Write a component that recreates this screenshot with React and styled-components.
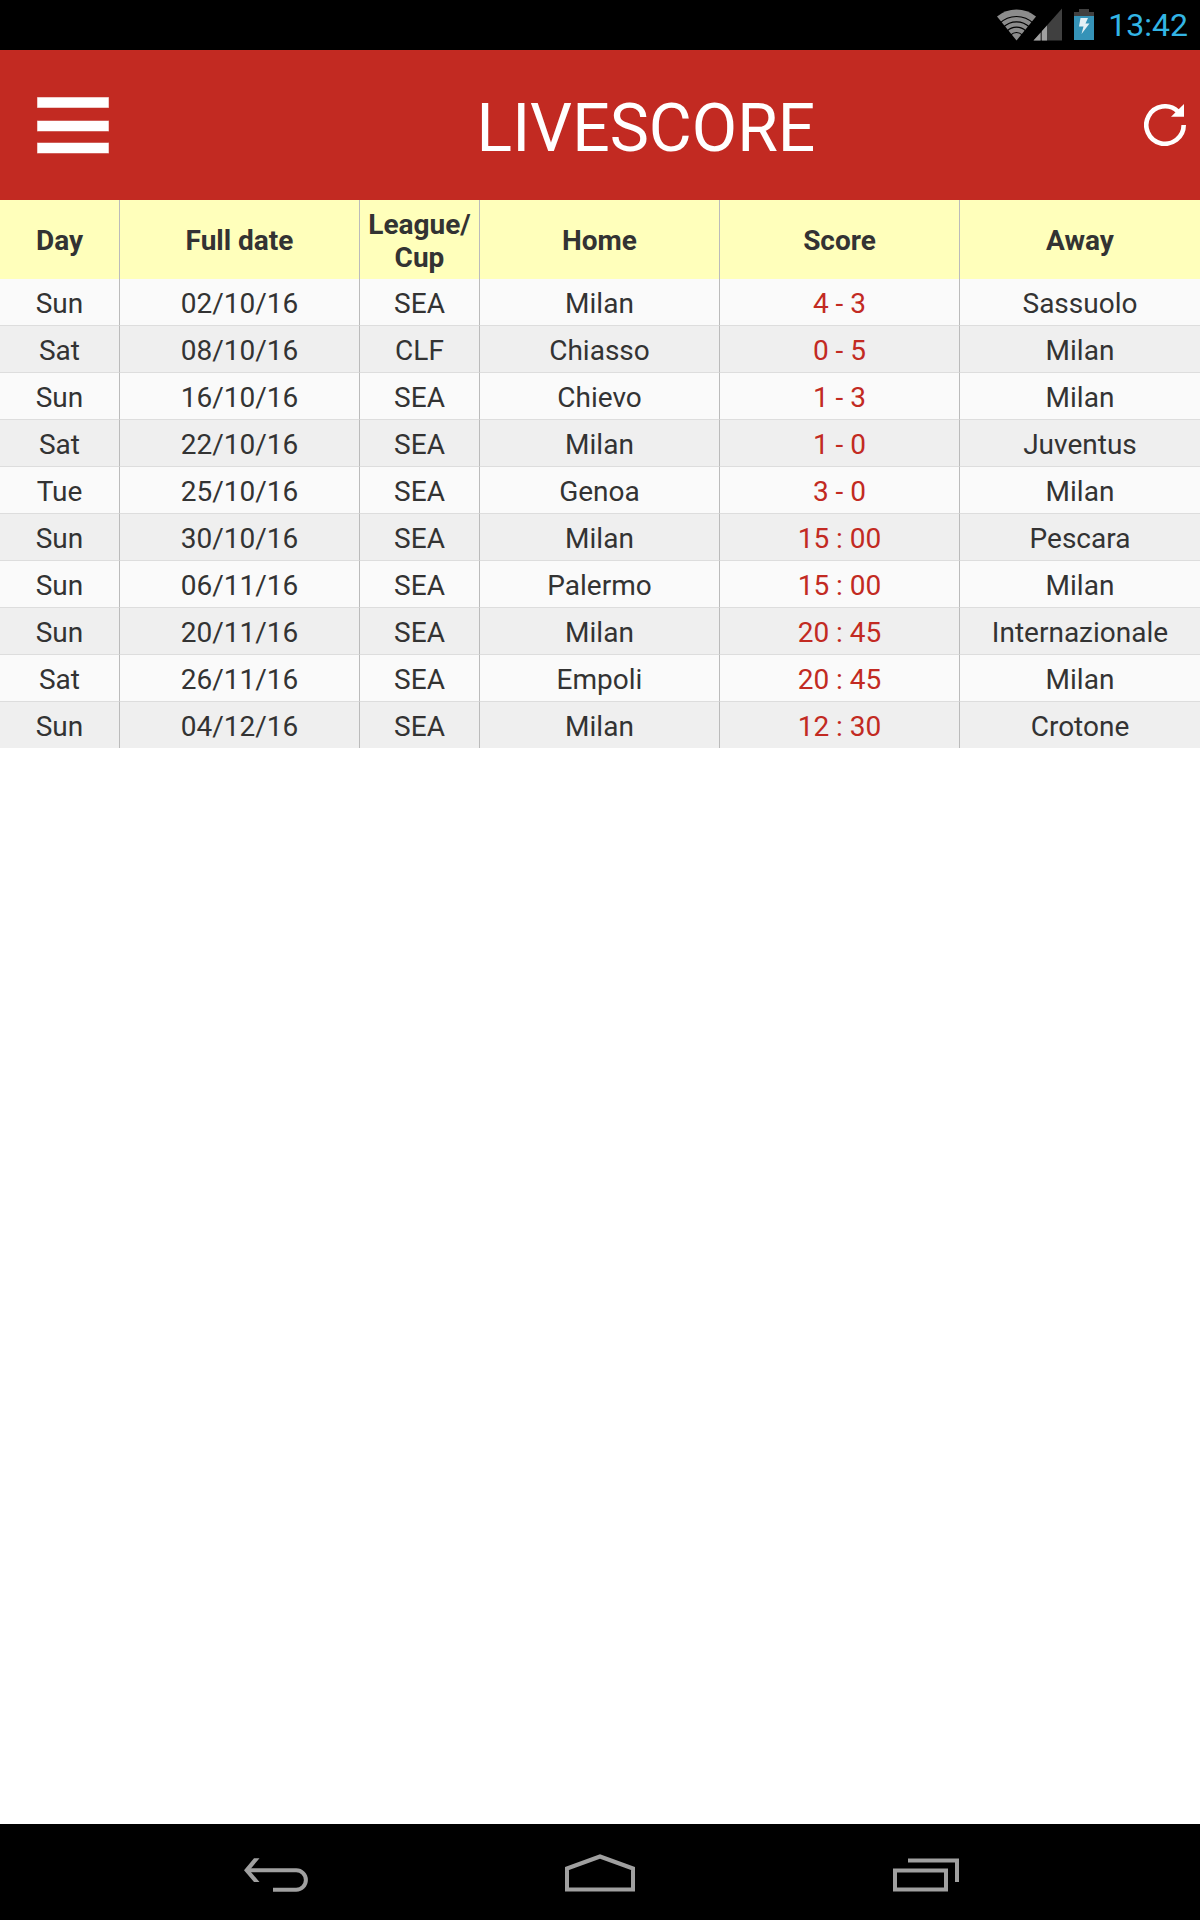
import React from "react";
import styled, { createGlobalStyle } from "styled-components";

const GlobalStyle = createGlobalStyle`
  *, *::before, *::after { box-sizing: border-box; }
  body {
    margin: 0;
    background: #fff;
    color: #333;
    font-family: Roboto, "Liberation Sans", sans-serif;
  }
`;

const Screen = styled.div`
  display: flex;
  flex-direction: column;
  min-height: 100vh;
`;

const StatusBar = styled.div`
  display: flex;
  align-items: center;
  justify-content: flex-end;
  height: 50px;
  padding-right: 12px;
  background: #000;
`;

const StatusIcons = styled.svg`
  display: block;
  width: 98px;
  height: 50px;
`;

const Clock = styled.time`
  margin-left: 14px;
  color: #33b5e5;
  font-size: 32px;
  line-height: 50px;
`;

const Header = styled.header`
  display: grid;
  grid-template-columns: 150px 1fr 58px;
  align-items: center;
  height: 150px;
  background: #c22a22;
  color: #fff;
`;

const Title = styled.h1`
  margin: 0;
  padding-top: 8px;
  font-size: 66px;
  font-weight: 400;
  line-height: 78px;
  text-align: center;
`;

const IconButton = styled.button`
  display: flex;
  align-items: center;
  height: 100%;
  padding: 0 0 0 ${(p) => p.$inset}px;
  border: 0;
  background: transparent;
  color: inherit;
  cursor: pointer;
`;

const Content = styled.main`
  flex: 1;
`;

const Table = styled.table`
  width: 100%;
  border-collapse: separate;
  border-spacing: 0;
  table-layout: fixed;
  font-size: 28px;
  line-height: 33px;
  text-align: center;
`;

const Col = styled.col`
  width: ${(p) => p.$width};
`;

const HeadCell = styled.th`
  height: 79px;
  padding: 2px 0 0;
  background: #ffffbb;
  font-weight: 700;

  &:not(:last-child) { border-right: 1px solid #bbb; }
`;

const Row = styled.tr`
  background: #fafafa;

  &:nth-child(even) { background: #efefef; }
`;

const Cell = styled.td`
  height: 47px;
  padding: 2px 0 0;
  border-bottom: 1px solid #ddd;
  color: ${(p) => (p.$score ? "#c22a22" : "inherit")};

  &:not(:last-child) { border-right: 1px solid #bbb; }

  ${Row}:last-child & {
    height: 46px;
    border-bottom: 0;
  }
`;

const NavBar = styled.nav`
  display: flex;
  justify-content: center;
  gap: 162px;
  height: 96px;
  background: #000;
`;

const NavButton = styled.button`
  width: 164px;
  height: 96px;
  padding: 0;
  border: 0;
  background: transparent;
  cursor: pointer;

  svg {
    display: block;
    fill: none;
    stroke: #a0a0a0;
    stroke-width: 4;
  }
`;

const columns = [
  { label: "Day", width: "10%" },
  { label: "Full date", width: "20%" },
  { label: "League/ Cup", width: "10%" },
  { label: "Home", width: "20%" },
  { label: "Score", width: "20%" },
  { label: "Away", width: "20%" },
];

const matches = [
  ["Sun", "02/10/16", "SEA", "Milan", "4 - 3", "Sassuolo"],
  ["Sat", "08/10/16", "CLF", "Chiasso", "0 - 5", "Milan"],
  ["Sun", "16/10/16", "SEA", "Chievo", "1 - 3", "Milan"],
  ["Sat", "22/10/16", "SEA", "Milan", "1 - 0", "Juventus"],
  ["Tue", "25/10/16", "SEA", "Genoa", "3 - 0", "Milan"],
  ["Sun", "30/10/16", "SEA", "Milan", "15 : 00", "Pescara"],
  ["Sun", "06/11/16", "SEA", "Palermo", "15 : 00", "Milan"],
  ["Sun", "20/11/16", "SEA", "Milan", "20 : 45", "Internazionale"],
  ["Sat", "26/11/16", "SEA", "Empoli", "20 : 45", "Milan"],
  ["Sun", "04/12/16", "SEA", "Milan", "12 : 30", "Crotone"],
];

function StatusGlyphs() {
  return (
    <StatusIcons viewBox="0 0 98 50" aria-hidden="true">
      <path d="M20.5 40.5 1 16.500A31 31 0 0 1 40 16.500Z" fill="#8c8c8c" />
      <g fill="none" stroke="#000" strokeWidth="1.200">
        <circle cx="20.500" cy="40.500" r="24" />
        <circle cx="20.500" cy="40.500" r="18.700" />
        <circle cx="20.500" cy="40.500" r="13.300" />
        <circle cx="20.500" cy="40.500" r="8" />
      </g>
      <path d="M66 8.500V40.500H37.500Z" fill="#404040" />
      <path d="M37.500 40.500 44.500 32.700V40.500ZM46 31V40.500H51V25.400Z" fill="#a0a0a0" />
      <path d="M83 9h10v3h5v4H78v-4h5z" fill="#404040" />
      <path d="M78 16h20v24H78z" fill="#3593b8" />
      <path d="M84.500 18h7.500l-2.500 5.500h4L85.500 34l2-7.500H83z" fill="#e4f1f6" />
    </StatusIcons>
  );
}

export default function App() {
  return (
    <Screen>
      <GlobalStyle />
      <StatusBar>
        <StatusGlyphs />
        <Clock dateTime="13:42">13:42</Clock>
      </StatusBar>

      <Header>
        <IconButton type="button" aria-label="Open menu" $inset={36}>
          <svg width="74" height="60" viewBox="0 0 74 60">
            <g fill="#fff" stroke="#fff" strokeOpacity=".5" strokeWidth="1">
              <rect x="1.500" y="2.500" width="71" height="10" />
              <rect x="1.500" y="26" width="71" height="10" />
              <rect x="1.500" y="48" width="71" height="10" />
            </g>
          </svg>
        </IconButton>
        <Title>LIVESCORE</Title>
        <IconButton type="button" aria-label="Refresh" $inset={2}>
          <svg width="42" height="42" viewBox="0 0 42 42">
            <path d="M39.700 21A18.700 18.700 0 1 1 33.800 7.400" fill="none" stroke="#fff" strokeWidth="4.600" />
            <path d="M40 0V12.800H27Z" fill="#fff" />
          </svg>
        </IconButton>
      </Header>

      <Content>
        <Table>
          <colgroup>
            {columns.map((c) => (
              <Col key={c.label} $width={c.width} />
            ))}
          </colgroup>
          <thead>
            <tr>
              {columns.map((c) => (
                <HeadCell key={c.label} scope="col">{c.label}</HeadCell>
              ))}
            </tr>
          </thead>
          <tbody>
            {matches.map((match) => (
              <Row key={match[1]}>
                {match.map((value, i) => (
                  <Cell key={columns[i].label} $score={i === 4}>{value}</Cell>
                ))}
              </Row>
            ))}
          </tbody>
        </Table>
      </Content>

      <NavBar aria-label="System">
        <NavButton type="button" aria-label="Back">
          <svg width="164" height="96" viewBox="0 0 164 96">
            <path d="M55 46.300H104.200A9.700 9.700 0 0 1 104.200 65.700H81" />
            <path d="M62 34.200h5.500L57.500 46.300 67.500 58H62L52 46.300Z" fill="#a0a0a0" stroke="none" />
          </svg>
        </NavButton>
        <NavButton type="button" aria-label="Home">
          <svg width="164" height="96" viewBox="0 0 164 96">
            <path d="M49 65.500V44.500L82 32.500 115 44.500V65.500Z" />
          </svg>
        </NavButton>
        <NavButton type="button" aria-label="Recent apps">
          <svg width="164" height="96" viewBox="0 0 164 96">
            <path d="M51 46.500H102V65.500H51Z" />
            <path d="M64 36.500H113V58" />
          </svg>
        </NavButton>
      </NavBar>
    </Screen>
  );
}
